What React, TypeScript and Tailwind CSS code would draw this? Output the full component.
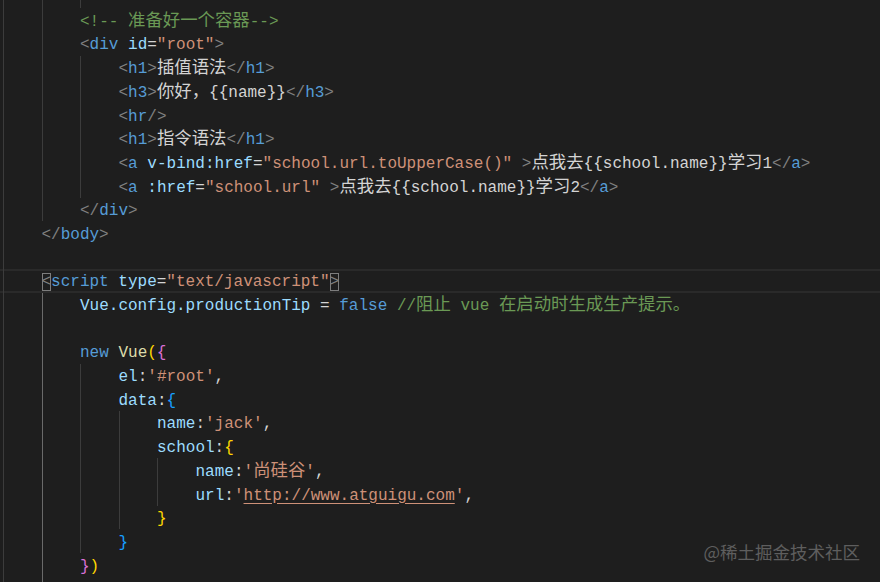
import type { ReactNode } from "react"

type Tok = [string, string, string?]

type Line = {
  ind: number
  guides: number[]
  toks: Tok[]
  cur?: boolean
}

const colors: Record<string, string> = {
  p: "text-[#808080]",
  t: "text-[#569cd6]",
  a: "text-[#9cdcfe]",
  s: "text-[#ce9178]",
  c: "text-[#6a9955]",
  w: "text-[#d4d4d4]",
  f: "text-[#dcdcaa]",
  y: "text-[#ffd700]",
  m: "text-[#da70d6]",
  b: "text-[#179fff]",
}

const tag = (name: string, close = false): Tok[] => [
  [close ? "</" : "<", "p"],
  [name, "t"],
  [">", "p"],
]

const lines: Line[] = [
  { ind: 3, guides: [0, 1, 2], toks: [] },
  { ind: 2, guides: [0, 1], toks: [["<!-- 准备好一个容器-->", "c"]] },
  {
    ind: 2,
    guides: [0, 1],
    toks: [["<", "p"], ["div", "t"], [" ", "w"], ["id", "a"], ["=", "w"], ['"root"', "s"], [">", "p"]],
  },
  { ind: 3, guides: [0, 1, 2], toks: [...tag("h1"), ["插值语法", "w"], ...tag("h1", true)] },
  { ind: 3, guides: [0, 1, 2], toks: [...tag("h3"), ["你好，{{name}}", "w"], ...tag("h3", true)] },
  { ind: 3, guides: [0, 1, 2], toks: [["<", "p"], ["hr", "t"], ["/>", "p"]] },
  { ind: 3, guides: [0, 1, 2], toks: [...tag("h1"), ["指令语法", "w"], ...tag("h1", true)] },
  {
    ind: 3,
    guides: [0, 1, 2],
    toks: [
      ["<", "p"], ["a", "t"], [" ", "w"], ["v-bind:href", "a"], ["=", "w"],
      ['"school.url.toUpperCase()"', "s"], [" >", "p"],
      ["点我去{{school.name}}学习1", "w"], ...tag("a", true),
    ],
  },
  {
    ind: 3,
    guides: [0, 1, 2],
    toks: [
      ["<", "p"], ["a", "t"], [" ", "w"], [":href", "a"], ["=", "w"],
      ['"school.url"', "s"], [" >", "p"],
      ["点我去{{school.name}}学习2", "w"], ...tag("a", true),
    ],
  },
  { ind: 2, guides: [0, 1], toks: tag("div", true) },
  { ind: 1, guides: [0], toks: tag("body", true) },
  { ind: 1, guides: [0], toks: [] },
  {
    ind: 1,
    guides: [0],
    cur: true,
    toks: [["<", "p", "box"], ["script", "t"], [" ", "w"], ["type", "a"], ["=", "w"], ['"text/javascript"', "s"], [">", "p", "box"]],
  },
  {
    ind: 2,
    guides: [0, 1],
    toks: [["Vue.config.productionTip", "a"], [" = ", "w"], ["false", "t"], [" ", "w"], ["//阻止 vue 在启动时生成生产提示。", "c"]],
  },
  { ind: 2, guides: [0, 1], toks: [] },
  { ind: 2, guides: [0, 1], toks: [["new", "t"], [" ", "w"], ["Vue", "f"], ["(", "y"], ["{", "m"]] },
  { ind: 3, guides: [0, 1, 2], toks: [["el", "a"], [":", "w"], ["'#root'", "s"], [",", "w"]] },
  { ind: 3, guides: [0, 1, 2], toks: [["data", "a"], [":", "w"], ["{", "b"]] },
  { ind: 4, guides: [0, 1, 2, 3], toks: [["name", "a"], [":", "w"], ["'jack'", "s"], [",", "w"]] },
  { ind: 4, guides: [0, 1, 2, 3], toks: [["school", "a"], [":", "w"], ["{", "y"]] },
  { ind: 5, guides: [0, 1, 2, 3, 4], toks: [["name", "a"], [":", "w"], ["'尚硅谷'", "s"], [",", "w"]] },
  {
    ind: 5,
    guides: [0, 1, 2, 3, 4],
    toks: [["url", "a"], [":", "w"], ["'", "s"], ["http://www.atguigu.com", "s", "u"], ["'", "s"], [",", "w"]],
  },
  { ind: 4, guides: [0, 1, 2, 3], toks: [["}", "y"]] },
  { ind: 3, guides: [0, 1, 2], toks: [["}", "b"]] },
  { ind: 2, guides: [0, 1], toks: [["}", "m"], [")", "y"]] },
  { ind: 2, guides: [0, 1], toks: [] },
]

// CJK runs get the wider fallback font, like the editor does
function withCjk(text: string): ReactNode[] {
  const parts = text.split(/([\u3000-\u9fff\uff00-\uffef]+)/)
  return parts.map((part, i) =>
    i % 2 === 1 ? (
      <span key={i} className="font-['Noto_Sans_CJK_SC',sans-serif] text-[17.4px] leading-[12px]">
        {part}
      </span>
    ) : (
      part
    )
  )
}

function CodeLine({ line, index }: { line: Line; index: number }) {
  const cols = Math.max(line.ind, line.guides.length)
  const activeBlock = index >= 13
  return (
    <div
      className={`flex h-[23.7px] shrink-0 items-stretch pl-[3px] leading-[23.7px] whitespace-pre ${
        line.cur ? "shadow-[inset_0_2px_0_#2a2a2a,inset_0_-2px_0_#2a2a2a]" : ""
      }`}
    >
      {Array.from({ length: cols }).map((_, i) => (
        <span
          key={i}
          className={`w-[38.5px] shrink-0 border-l ${
            line.guides.includes(i)
              ? i === 1 && activeBlock
                ? "border-[#6a6a6a]"
                : "border-[#3c3c3c]"
              : "border-transparent"
          }`}
        />
      ))}
      <span className="pt-[2.5px]">
        {line.toks.map(([text, color, kind], i) => (
          <span
            key={i}
            className={`${colors[color]} ${kind === "box" ? "outline outline-[#7d7d7d] -outline-offset-1" : ""} ${
              kind === "u" ? "underline decoration-[#ce9178] underline-offset-[3px]" : ""
            }`}
          >
            {withCjk(text)}
          </span>
        ))}
      </span>
    </div>
  )
}

export default function App() {
  return (
    <div className="relative h-[582px] w-[880px] overflow-hidden bg-[#1e1e1e] font-['Liberation_Mono',monospace] text-[16px]">
      <div className="-mt-[15.4px] flex flex-col">
        {lines.map((line, i) => (
          <CodeLine key={i} line={line} index={i} />
        ))}
      </div>
      <div className="absolute top-[540px] right-[20px] font-['Noto_Sans_CJK_SC',sans-serif] text-[17.5px] leading-[24px] text-[#5e5e5e]">
        @稀土掘金技术社区
      </div>
    </div>
  )
}
